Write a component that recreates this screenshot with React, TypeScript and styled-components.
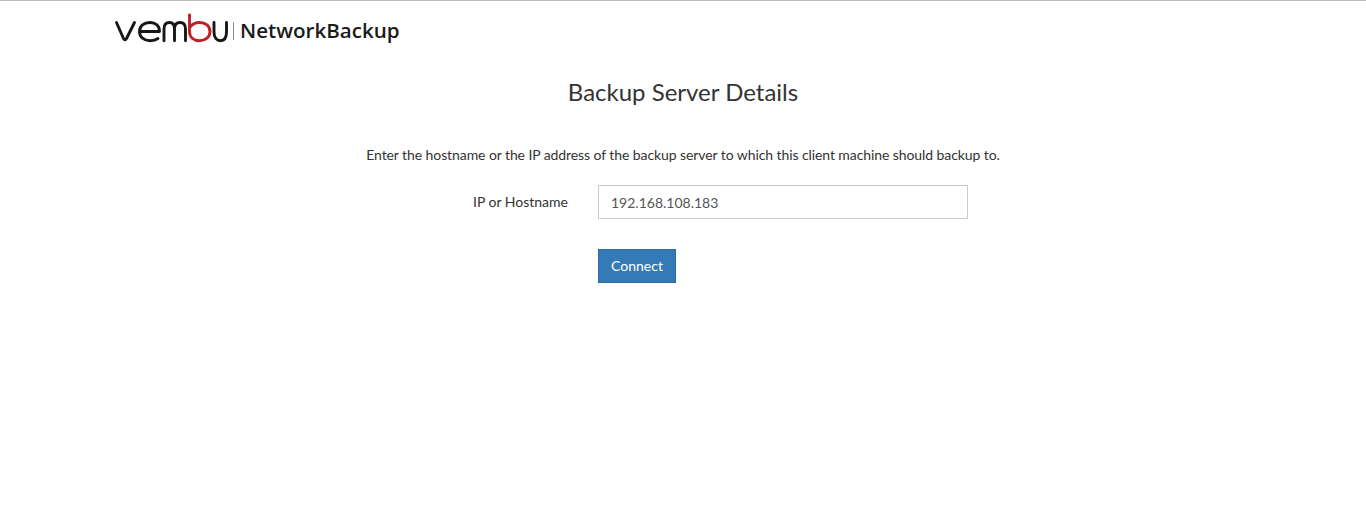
import { FC } from "react";
import styled, { createGlobalStyle } from "styled-components";

const GlobalStyle = createGlobalStyle`
  html, body {
    background: #fff;
    margin: 0;
  }
  body {
    color: #333;
    font-family: Lato, "Liberation Sans", sans-serif;
    font-size: 14px;
    line-height: 20px;
  }
`;

const Page = styled.div`
  border-top: 1px solid #bdbdbd;
  height: 510px;
  overflow: hidden;
`;

const Header = styled.header`
  align-items: center;
  display: flex;
  height: 59px;
  padding-left: 114px;
`;

const LogoSvg = styled.svg`
  margin-bottom: 3px;
`;

const Separator = styled.span`
  background: #8f8f8f;
  height: 18px;
  margin: 0 6px 0 4px;
  width: 1px;
`;

const Product = styled.span`
  color: #1a1a1a;
  font-family: "Open Sans", sans-serif;
  font-size: 20.6px;
  font-weight: 600;
  line-height: 28px;
  margin-bottom: 2px;
`;

const Main = styled.main`
  text-align: center;
`;

const Title = styled.h1`
  font-size: 24px;
  font-weight: 400;
  line-height: 26px;
  margin: 19px 0 0;
`;

const Intro = styled.p`
  letter-spacing: -0.085px;
  margin: 40px 0 0;
`;

const Form = styled.form`
  column-gap: 30px;
  display: grid;
  grid-template-columns: 470px 370px;
  margin: 20px 0 0 98px;
  row-gap: 30px;
`;

const Label = styled.label`
  align-self: center;
  text-align: right;
`;

const Input = styled.input`
  border: 1px solid #ccc;
  box-sizing: border-box;
  color: #555;
  font-family: inherit;
  font-size: 14px;
  height: 34px;
  outline: none;
  padding: 0 12px;
  width: 370px;
`;

const Connect = styled.button`
  background: #337ab7;
  border: 1px solid #2e6da4;
  box-sizing: border-box;
  color: #fff;
  font-family: inherit;
  font-size: 14px;
  grid-column: 2;
  height: 34px;
  padding: 0 0 2px;
  width: 78px;
`;

const VembuLogo: FC = () => (
  <LogoSvg width="115" height="32" viewBox="0 0 115 32" fill="none" strokeWidth="2.9" strokeLinecap="round" strokeLinejoin="round">
    <g stroke="#17171a">
      <path d="M2.5 9.5 L9.5 25.5 Q11 28.3 12.5 25.5 L20.5 9.5" />
      <path d="M26 18.5 H45.5 C45.5 12.5 41.5 9.5 36 9.5 C30 9.5 25.5 13 25.5 18.5 C25.5 24 30 27.7 36 27.7 C39.5 27.7 42 27 44 25.5" />
      <path d="M50 27.7 V16 C50 11.5 52 9.5 55.5 9.5 C59 9.5 60.5 11.5 60.5 16 V27.7 M60.5 16 C60.5 11.5 62.5 9.5 66 9.5 C69.5 9.5 71.5 11.5 71.5 16 V27.7" />
      <path d="M100 9.5 V19 C100 25 103 27.7 106.5 27.7 C110 27.7 112.5 25 112.5 19 V9.5" />
    </g>
    <path stroke="#be2026" d="M75.5 2 V18.5 C75.5 24.5 80 27.7 85.5 27.7 C91.5 27.7 96 24 96 18.5 C96 13 91.5 9.5 85.5 9.5 C82 9.5 79 10.5 76.5 13.5" />
  </LogoSvg>
);

export default function App() {
  return (
    <Page>
      <GlobalStyle />
      <Header>
        <VembuLogo />
        <Separator />
        <Product>NetworkBackup</Product>
      </Header>
      <Main>
        <Title>Backup Server Details</Title>
        <Intro>Enter the hostname or the IP address of the backup server to which this client machine should backup to.</Intro>
        <Form onSubmit={(e) => e.preventDefault()}>
          <Label htmlFor="host">IP or Hostname</Label>
          <Input id="host" defaultValue="192.168.108.183" />
          <Connect type="submit">Connect</Connect>
        </Form>
      </Main>
    </Page>
  );
}
